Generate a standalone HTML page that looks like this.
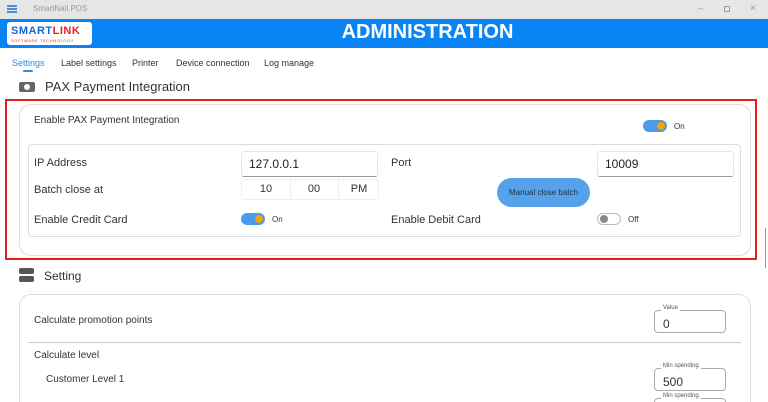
<!DOCTYPE html>
<html style="width:768px;height:402px;overflow:hidden"><head><meta charset="utf-8"><style>
*{box-sizing:border-box;margin:0;padding:0}
body{width:768px;height:402px;overflow:hidden;background:#fff;font-family:"Liberation Sans",sans-serif;color:#333;position:relative}
.abs{position:absolute}
.tb{left:0;top:0;width:768px;height:19px;background:#e6e6e6}
.hd{left:0;top:19px;width:768px;height:29px;background:#0a84f4}
.t{position:absolute;white-space:nowrap}
.box{position:absolute;border:1px solid #ddd;border-radius:12px;background:#fff}
.inp{position:absolute;background:#fff;border:1px solid #e6e6e6;border-bottom:1px solid #999;border-radius:3px;font-size:12px;padding:5px 7px;color:#222}
.tog{position:absolute;width:24px;height:12px;border-radius:6px;background:#4a9bea}
.tog i{position:absolute;right:2px;top:2px;width:8px;height:8px;border-radius:50%;background:#f5a300}
.tog.off{background:#fff;border:1px solid #bbb}
.tog.off i{left:2px;right:auto;top:1px;background:#888}
.fs{position:absolute;border:1px solid #aaa;border-radius:4px;font-size:12px;padding:6px 8px}
.fs span{position:absolute;top:-6px;left:6px;background:#fff;font-size:6px;padding:0 2px;color:#555}
</style></head><body>
<div class="abs tb"></div>
<div class="abs" style="left:7px;top:5px;width:10px;height:2px;background:#4a90d9;box-shadow:0 3px 0 #4a90d9,0 6px 0 #4a90d9"></div>
<div class="t" style="left:33px;top:4px;font-size:8px;color:#999">SmartNail.POS</div>
<div class="t" style="left:698px;top:3px;font-size:9px;color:#999">–</div>
<div class="abs" style="left:724px;top:6px;width:6px;height:6px;border:1px solid #999;border-radius:1px"></div>
<div class="t" style="left:750px;top:3px;font-size:10px;color:#999">×</div>
<div class="abs hd"></div>
<div class="abs" style="left:7px;top:22px;width:85px;height:23px;background:#fff;border-radius:3px"></div>
<div class="t" style="left:11px;top:25px;font-size:11px;font-weight:bold;letter-spacing:0.5px;color:#1566d8">SMART<span style="color:#e8202a">LINK</span></div>
<div class="t" style="left:11px;top:38px;font-size:4px;color:#e8202a;letter-spacing:0.6px">SOFTWARE TECHNOLOGY</div>
<div class="t" style="left:0;width:855px;text-align:center;top:21px;font-size:20px;font-weight:bold;color:#fff">ADMINISTRATION</div>
<div class="t" style="left:12px;top:58px;font-size:9px;color:#2d8ae6">Settings</div>
<div class="abs" style="left:23px;top:70px;width:10px;height:2px;background:#2d8ae6;border-radius:1px"></div>
<div class="t" style="left:61px;top:58px;font-size:9px">Label settings</div>
<div class="t" style="left:132px;top:58px;font-size:9px">Printer</div>
<div class="t" style="left:176px;top:58px;font-size:9px">Device connection</div>
<div class="t" style="left:264px;top:58px;font-size:9px">Log manage</div>
<div class="abs" style="left:19px;top:82px;width:16px;height:10px;background:#666;border-radius:2px"></div>
<div class="abs" style="left:24px;top:84px;width:6px;height:6px;background:#fff;border-radius:50%"></div>
<div class="t" style="left:45px;top:79px;font-size:13px">PAX Payment Integration</div>
<div class="abs" style="left:5px;top:99px;width:752px;height:161px;border:2px solid #e02020"></div>
<div class="box" style="left:19px;top:104px;width:732px;height:152px"></div>
<div class="t" style="left:34px;top:115px;font-size:10px">Enable PAX Payment Integration</div>
<div class="tog" style="left:643px;top:120px"><i></i></div>
<div class="t" style="left:674px;top:122px;font-size:8px">On</div>
<div class="box" style="left:28px;top:144px;width:713px;height:93px;border-radius:4px"></div>
<div class="t" style="left:34px;top:157px;font-size:11px">IP Address</div>
<div class="inp" style="left:241px;top:151px;width:137px;height:26px">127.0.0.1</div>
<div class="t" style="left:391px;top:157px;font-size:11px">Port</div>
<div class="inp" style="left:597px;top:151px;width:137px;height:26px">10009</div>
<div class="t" style="left:34px;top:184px;font-size:11px">Batch close at</div>
<div class="abs" style="left:241px;top:179px;width:138px;height:21px;border:1px solid #eee;border-radius:3px;font-size:11px">
<div class="t" style="left:0;width:48px;text-align:center;top:3px">10</div>
<div class="abs" style="left:48px;top:0;width:1px;height:19px;background:#eee"></div>
<div class="t" style="left:48px;width:48px;text-align:center;top:3px">00</div>
<div class="abs" style="left:96px;top:0;width:1px;height:19px;background:#eee"></div>
<div class="t" style="left:96px;width:42px;text-align:center;top:3px">PM</div></div>
<div class="abs" style="left:497px;top:178px;width:93px;height:29px;border-radius:15px;background:#55a2ea;font-size:8px;color:#234;text-align:center;line-height:29px">Manual close batch</div>
<div class="t" style="left:34px;top:214px;font-size:11px">Enable Credit Card</div>
<div class="tog" style="left:241px;top:213px"><i></i></div>
<div class="t" style="left:272px;top:215px;font-size:8px">On</div>
<div class="t" style="left:391px;top:214px;font-size:11px">Enable Debit Card</div>
<div class="tog off" style="left:597px;top:213px"><i></i></div>
<div class="t" style="left:628px;top:215px;font-size:8px">Off</div>
<div class="abs" style="left:19px;top:268px;width:15px;height:6px;background:#555;border-radius:2px;box-shadow:0 8px 0 #555"></div>
<div class="t" style="left:44px;top:269px;font-size:12px">Setting</div>
<div class="box" style="left:19px;top:294px;width:732px;height:120px"></div>
<div class="t" style="left:34px;top:315px;font-size:10px">Calculate promotion points</div>
<div class="fs" style="left:654px;top:310px;width:72px;height:23px"><span>Value</span>0</div>
<div class="abs" style="left:28px;top:342px;width:713px;height:1px;background:#ccc"></div>
<div class="t" style="left:34px;top:350px;font-size:10px">Calculate level</div>
<div class="t" style="left:46px;top:374px;font-size:10px">Customer Level 1</div>
<div class="fs" style="left:654px;top:368px;width:72px;height:23px"><span>Min spending</span>500</div>
<div class="fs" style="left:654px;top:398px;width:72px;height:23px"><span>Min spending</span></div>
<div class="abs" style="left:765px;top:228px;width:1px;height:40px;background:#999"></div>
</body></html>
